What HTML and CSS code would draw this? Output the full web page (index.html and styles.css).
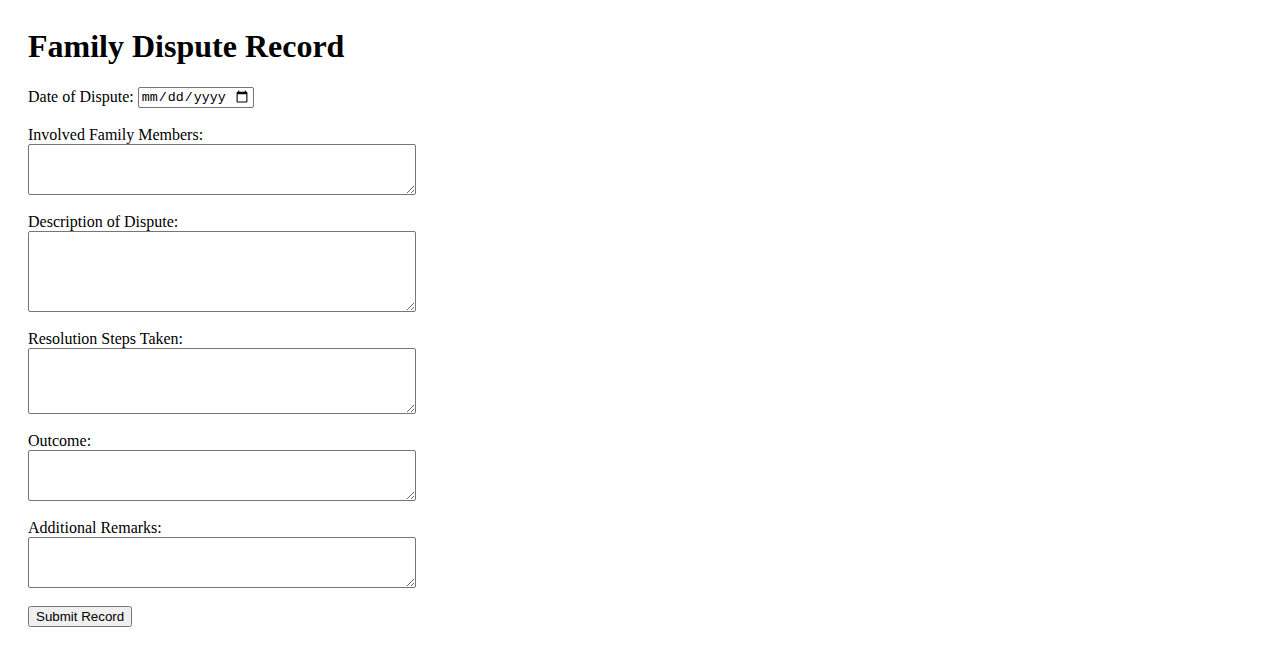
FILE: index.html
```html
<!DOCTYPE html>
<html lang="en">
<head>
<meta charset="utf-8">
<title>Family Dispute Record</title>
<link rel="stylesheet" href="styles.css">
</head>
<body>
<h1 class="title">Family Dispute Record</h1>
<form class="record-form">
  <div class="date-row">
    <label for="date" class="label">Date of Dispute:</label>
    <input type="date" id="date" class="date-input">
  </div>
  <div class="field">
    <label for="members" class="label">Involved Family Members:</label>
    <textarea id="members" class="area area-3"></textarea>
  </div>
  <div class="field">
    <label for="desc" class="label">Description of Dispute:</label>
    <textarea id="desc" class="area area-5"></textarea>
  </div>
  <div class="field">
    <label for="steps" class="label">Resolution Steps Taken:</label>
    <textarea id="steps" class="area area-4"></textarea>
  </div>
  <div class="field">
    <label for="outcome" class="label">Outcome:</label>
    <textarea id="outcome" class="area area-3"></textarea>
  </div>
  <div class="field">
    <label for="remarks" class="label">Additional Remarks:</label>
    <textarea id="remarks" class="area area-3"></textarea>
  </div>
  <button type="submit" class="submit">Submit Record</button>
</form>
</body>
</html>
```

FILE: styles.css
```css
html, body {
  background: #fff;
}
body {
  margin: 0;
  padding: 28px;
  font-family: "Liberation Serif", "Times New Roman", serif;
  font-size: 16px;
  color: #000;
}
.title {
  margin: 0 0 21px 0;
  font-size: 32px;
  line-height: 37px;
  font-weight: bold;
}
.record-form {
  display: flex;
  flex-direction: column;
  align-items: flex-start;
}
.date-row {
  display: flex;
  align-items: center;
  gap: 4px;
  height: 22px;
  margin-bottom: 18px;
}
.label {
  line-height: 18px;
}
.date-input {
  box-sizing: border-box;
  width: 116px;
  height: 21px;
  margin: 0;
  padding: 1px 2px;
  font-family: "Liberation Mono", "Courier New", monospace;
  font-size: 13.33px;
  border: 1px solid #767676;
  border-radius: 2px;
}
.field {
  display: flex;
  flex-direction: column;
  align-items: flex-start;
  margin-bottom: 18px;
}
.area {
  box-sizing: border-box;
  width: 388px;
  margin: 0;
  padding: 2px;
  border: 1px solid #767676;
  border-radius: 2px;
  font-family: "Liberation Mono", "Courier New", monospace;
  font-size: 13.33px;
}
.area-3 { height: 51px; }
.area-4 { height: 66px; }
.area-5 { height: 81px; }
.submit {
  box-sizing: border-box;
  height: 21px;
  margin: 0;
  padding: 1px 6px;
  font-family: "Liberation Sans", Arial, sans-serif;
  font-size: 13.33px;
}
```
